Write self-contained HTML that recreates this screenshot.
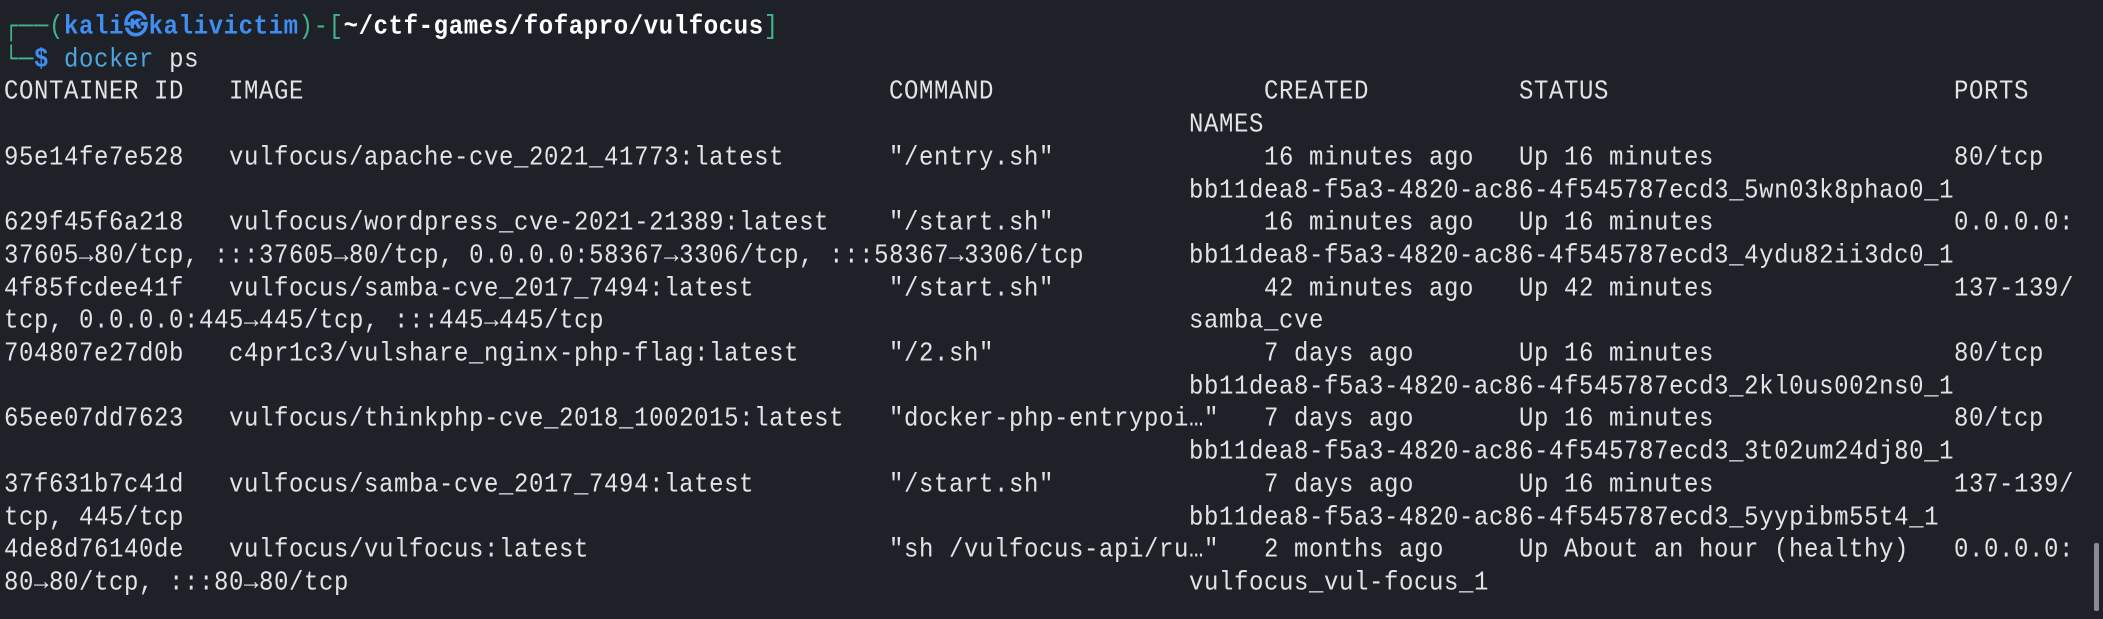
<!DOCTYPE html>
<html><head><meta charset="utf-8"><style>
html,body{margin:0;padding:0;}
body{width:2103px;height:619px;background:#1f2129;overflow:hidden;position:relative;
font-family:"Liberation Mono","DejaVu Sans Mono",monospace;font-size:24px;letter-spacing:0.6px;color:#e3e3e6;}
.l{position:absolute;left:0;width:2103px;height:33px;line-height:33px;white-space:pre;margin-top:2px;}
.l>span{position:absolute;top:0;transform:scaleY(1.1);transform-origin:0 50%;}
.c0{left:4px}.c15{left:229px}.c59{left:889px}.c79{left:1189px}.c84{left:1264px}.c101{left:1519px}.c130{left:1954px}
.g{color:#3fb58e}.b{color:#3f8ef0;font-weight:bold}.w{color:#fff;font-weight:bold}.cy{color:#4ea6dd}
.sb{position:absolute;left:2094px;top:543px;width:5px;height:68px;background:#8a8c92;border-radius:2px}
</style></head><body>
<div class="l" style="top:9px"><span class="c0"><span class="g">┌──(</span><span class="b">kali㉿kalivictim</span><span class="g">)-[</span><span class="w">~/ctf-games/fofapro/vulfocus</span><span class="g">]</span></span></div>
<div class="l" style="top:41.7px"><span class="c0"><span class="g">└─</span><span class="b">$</span> <span class="cy">docker</span> ps</span></div>
<div class="l" style="top:74.4px"><span class="c0">CONTAINER ID</span><span class="c15">IMAGE</span><span class="c59">COMMAND</span><span class="c84">CREATED</span><span class="c101">STATUS</span><span class="c130">PORTS</span></div>
<div class="l" style="top:107.1px"><span class="c79">NAMES</span></div>
<div class="l" style="top:139.8px"><span class="c0">95e14fe7e528</span><span class="c15">vulfocus/apache-cve_2021_41773:latest</span><span class="c59">"/entry.sh"</span><span class="c84">16 minutes ago</span><span class="c101">Up 16 minutes</span><span class="c130">80/tcp</span></div>
<div class="l" style="top:172.5px"><span class="c79">bb11dea8-f5a3-4820-ac86-4f545787ecd3_5wn03k8phao0_1</span></div>
<div class="l" style="top:205.2px"><span class="c0">629f45f6a218</span><span class="c15">vulfocus/wordpress_cve-2021-21389:latest</span><span class="c59">"/start.sh"</span><span class="c84">16 minutes ago</span><span class="c101">Up 16 minutes</span><span class="c130">0.0.0.0:</span></div>
<div class="l" style="top:237.9px"><span class="c0">37605→80/tcp, :::37605→80/tcp, 0.0.0.0:58367→3306/tcp, :::58367→3306/tcp</span><span class="c79">bb11dea8-f5a3-4820-ac86-4f545787ecd3_4ydu82ii3dc0_1</span></div>
<div class="l" style="top:270.6px"><span class="c0">4f85fcdee41f</span><span class="c15">vulfocus/samba-cve_2017_7494:latest</span><span class="c59">"/start.sh"</span><span class="c84">42 minutes ago</span><span class="c101">Up 42 minutes</span><span class="c130">137-139/</span></div>
<div class="l" style="top:303.3px"><span class="c0">tcp, 0.0.0.0:445→445/tcp, :::445→445/tcp</span><span class="c79">samba_cve</span></div>
<div class="l" style="top:336px"><span class="c0">704807e27d0b</span><span class="c15">c4pr1c3/vulshare_nginx-php-flag:latest</span><span class="c59">"/2.sh"</span><span class="c84">7 days ago</span><span class="c101">Up 16 minutes</span><span class="c130">80/tcp</span></div>
<div class="l" style="top:368.7px"><span class="c79">bb11dea8-f5a3-4820-ac86-4f545787ecd3_2kl0us002ns0_1</span></div>
<div class="l" style="top:401.4px"><span class="c0">65ee07dd7623</span><span class="c15">vulfocus/thinkphp-cve_2018_1002015:latest</span><span class="c59">"docker-php-entrypoi…"</span><span class="c84">7 days ago</span><span class="c101">Up 16 minutes</span><span class="c130">80/tcp</span></div>
<div class="l" style="top:434.1px"><span class="c79">bb11dea8-f5a3-4820-ac86-4f545787ecd3_3t02um24dj80_1</span></div>
<div class="l" style="top:466.8px"><span class="c0">37f631b7c41d</span><span class="c15">vulfocus/samba-cve_2017_7494:latest</span><span class="c59">"/start.sh"</span><span class="c84">7 days ago</span><span class="c101">Up 16 minutes</span><span class="c130">137-139/</span></div>
<div class="l" style="top:499.5px"><span class="c0">tcp, 445/tcp</span><span class="c79">bb11dea8-f5a3-4820-ac86-4f545787ecd3_5yypibm55t4_1</span></div>
<div class="l" style="top:532.2px"><span class="c0">4de8d76140de</span><span class="c15">vulfocus/vulfocus:latest</span><span class="c59">"sh /vulfocus-api/ru…"</span><span class="c84">2 months ago</span><span class="c101">Up About an hour (healthy)</span><span class="c130">0.0.0.0:</span></div>
<div class="l" style="top:564.9px"><span class="c0">80→80/tcp, :::80→80/tcp</span><span class="c79">vulfocus_vul-focus_1</span></div>
<div class="sb"></div>
</body></html>
